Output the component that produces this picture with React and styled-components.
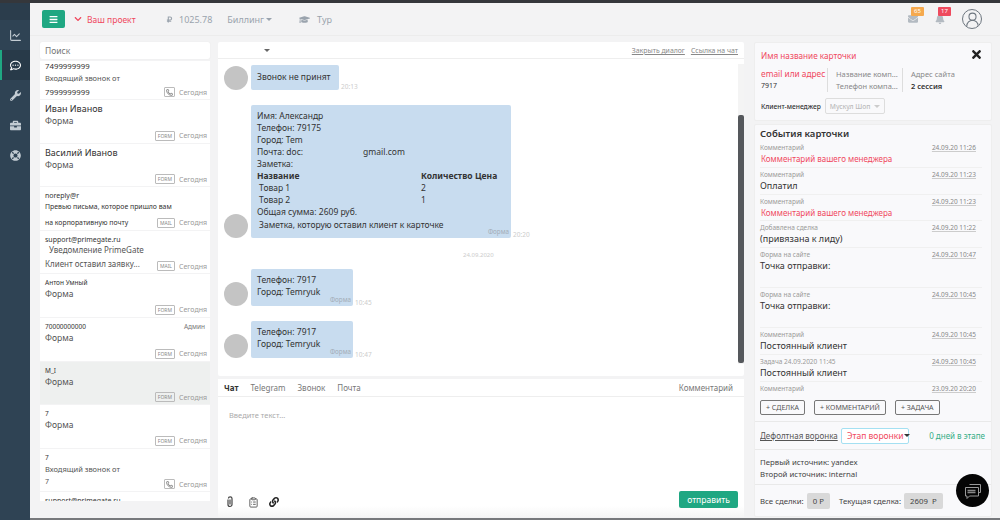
import React from 'react'
import styled, { createGlobalStyle } from 'styled-components'
import {
  FaBars,
  FaBell,
  FaBriefcase,
  FaChevronDown,
  FaEnvelope,
  FaGraduationCap,
  FaLifeRing,
  FaLink,
  FaRegCommentDots,
  FaRubleSign,
  FaTimes,
  FaWrench,
} from 'react-icons/fa'
import { ChartLine, ClipboardList, Phone, UserRound } from 'lucide-react'

const GlobalStyle = createGlobalStyle`
  html, body { margin: 0; padding: 0; height: 520px; overflow: hidden; }
  body { font-family: 'Noto Sans', Roboto, sans-serif; background: #f3f3f4; color: #333; }
  * { box-sizing: border-box; }
`

const Page = styled.div`
  width: 1000px;
  height: 520px;
  display: flex;
  flex-direction: column;
  overflow: hidden;
  position: relative;
`
const TopStripe = styled.div`
  height: 3px;
  flex: none;
  background: #35373b;
`
const BottomStripe = styled.div`
  height: 2px;
  flex: none;
  margin-left: 30px;
  background: #77797c;
`
const Shell = styled.div`
  flex: 1;
  min-height: 0;
  display: flex;
`
const Sidebar = styled.nav`
  width: 30px;
  flex: none;
  background: #2f4354;
  margin-bottom: -2px;
`
const SideLogo = styled.div`
  height: 17px;
  background: #2b3d4c;
`
const SideItem = styled.div`
  height: 30px;
  display: flex;
  align-items: center;
  justify-content: center;
  font-size: 11px;
  background: ${p => (p.$active ? '#283a49' : 'transparent')};
  border-left: 2px solid ${p => (p.$active ? '#1fa782' : 'transparent')};
  padding-right: 2px;
  color: ${p => (p.$active ? '#ffffff' : '#c3ccd3')};
`
const Main = styled.div`
  flex: 1;
  min-width: 0;
  display: flex;
  flex-direction: column;
`
const Header = styled.header`
  height: 33px;
  flex: none;
  display: flex;
  align-items: center;
  padding: 0 18px 0 12px;
  border-bottom: 1px solid #ececec;
  color: #9aa3ad;
  font-size: 9px;
`
const MenuButton = styled.button`
  width: 23px;
  height: 18px;
  border: 0;
  border-radius: 2px;
  background: #1fa782;
  color: #fff;
  font-size: 9px;
  display: flex;
  align-items: center;
  justify-content: center;
  padding: 0;
  margin-right: 9px;
`
const ProjectName = styled.span`
  display: flex;
  align-items: center;
  gap: 5px;
  color: #f0485e;
  width: 92px;
  font-size: 8.5px;
`
const HeaderItem = styled.span`
  display: flex;
  align-items: center;
  gap: ${p => p.$gap || 5}px;
  margin-right: ${p => p.$after || 0}px;
`
const Caret = styled.span`
  display: inline-block;
  width: 0;
  height: 0;
  border-left: 3px solid transparent;
  border-right: 3px solid transparent;
  border-top: 3px solid ${p => p.$color || '#9aa3ad'};
`
const HeaderRight = styled.div`
  margin-left: auto;
  display: flex;
  align-items: center;
`
const NoticeIcon = styled.span`
  position: relative;
  display: flex;
  color: #b3bac1;
  font-size: 10px;
  margin-right: ${p => p.$after}px;
`
const Count = styled.span`
  position: absolute;
  top: -7px;
  left: 3px;
  min-width: 13px;
  height: 9px;
  border-radius: 1px;
  background: ${p => p.$bg};
  color: #fff;
  font-size: 6px;
  line-height: 9px;
  text-align: center;
`
const UserCircle = styled.span`
  width: 20px;
  height: 20px;
  border-radius: 50%;
  border: 1px solid #6e7780;
  display: flex;
  align-items: flex-end;
  justify-content: center;
  color: #6e7780;
  overflow: hidden;
`
const Columns = styled.div`
  flex: 1;
  min-height: 0;
  display: flex;
  padding-top: 6px;
`

/* left list */
const ListColumn = styled.section`
  width: 170px;
  margin-left: 10px;
  flex: none;
  display: flex;
  flex-direction: column;
  height: 459px;
`
const Search = styled.div`
  height: 17px;
  flex: none;
  background: #fff;
  color: #777;
  font-size: 8.5px;
  line-height: 17px;
  padding-left: 5px;
  border-radius: 2px;
  margin-bottom: 2px;
  box-shadow: 0 0 1px #ddd;
`
const List = styled.div`
  flex: 1;
  min-height: 0;
  overflow: hidden;
  display: flex;
  flex-direction: column;
  gap: 1px;
  background: #f3f3f4;
`
const Item = styled.div`
  flex: none;
  height: ${p => p.$h || 42.6}px;
  background: ${p => (p.$selected ? '#eef0ef' : '#fff')};
  padding: ${p => p.$top ?? 3}px 3px 0 5px;
  display: flex;
  flex-direction: column;
  overflow: hidden;
`
const ItemName = styled.div`
  font-size: ${p => p.$size || 7.5}px;
  line-height: ${p => p.$line || 11}px;
  height: ${p => p.$line || 11}px;
  color: #333;
  display: flex;
  justify-content: space-between;
  white-space: nowrap;
`
const Owner = styled.span`
  color: #777;
  padding-right: 2px;
`
const ItemText = styled.div`
  font-size: ${p => p.$size || 8.5}px;
  line-height: ${p => p.$line || 12.5}px;
  color: ${p => p.$color || '#555'};
  padding-left: ${p => p.$pad || 0}px;
  white-space: nowrap;
`
const ItemFooter = styled.div`
  margin-top: auto;
  height: 12px;
  margin-bottom: 1px;
  display: flex;
  align-items: center;
  font-size: ${p => p.$size || 8.5}px;
  color: #333;
  white-space: nowrap;
`
const LiftedText = styled.span`
  color: #555;
  margin-top: -6px;
`
const Meta = styled.span`
  margin-left: auto;
  display: flex;
  align-items: center;
  gap: 4px;
  color: #9a9a9a;
  font-size: 7px;
`
const Tag = styled.span`
  height: 10px;
  min-width: 11px;
  padding: 0 2px;
  border: 1px solid #bbb;
  border-radius: 1px;
  color: #888;
  font-size: 5px;
  line-height: 8px;
  display: flex;
  align-items: center;
  justify-content: center;
`
const PhoneGlyph = styled(Phone)`
  flex: none;
  margin: 0 -2px;
  color: #666;
`

/* chat */
const ChatColumn = styled.section`
  width: 526px;
  flex: none;
  margin-left: 8px;
  display: flex;
  flex-direction: column;
  height: 475px;
`
const ChatTop = styled.div`
  height: 17px;
  flex: none;
  background: #fff;
  border-bottom: 1px solid #eee;
  display: flex;
  align-items: center;
  padding: 0 6px 0 46px;
  border-radius: 2px 2px 0 0;
`
const TopLinks = styled.div`
  margin-left: auto;
  display: flex;
  gap: 6px;
  font-size: 6.9px;
  color: #888;
  text-decoration: underline;
`
const Thread = styled.div`
  height: 317px;
  flex: none;
  background: #fff;
  display: flex;
  overflow: hidden;
  border-radius: 0 0 2px 2px;
`
const Messages = styled.div`
  flex: 1;
  min-width: 0;
  padding: 6px 0 0 6px;
  display: flex;
  flex-direction: column;
`
const Message = styled.div`
  display: flex;
  align-items: flex-end;
  margin-bottom: ${p => p.$after}px;
`
const Avatar = styled.span`
  width: 24px;
  height: 24px;
  flex: none;
  border-radius: 50%;
  background: #c4c4c4;
  margin-right: 3px;
`
const Bubble = styled.div`
  position: relative;
  width: ${p => p.$w}px;
  height: ${p => p.$h}px;
  background: #c8dcef;
  border-radius: 2px;
  padding: ${p => p.$top ?? 5}px 6px 0;
  font-size: 8.5px;
  line-height: 12px;
  color: #333;
  white-space: nowrap;
`
const Source = styled.span`
  position: absolute;
  right: 2px;
  bottom: 2px;
  color: #a3adb7;
  font-size: 6.3px;
  line-height: 8px;
`
const Time = styled.span`
  color: #ccc;
  font-size: 6.5px;
  line-height: 8px;
  margin: 0 0 -1px 2px;
`
const DateMark = styled.div`
  color: #ccc;
  font-size: 6px;
  line-height: 8px;
  padding-left: 239px;
  margin-bottom: 10px;
`
const ProductGrid = styled.div`
  display: grid;
  grid-template-columns: 164px 54px 1fr;
  line-height: ${p => (p.$head ? 12 : 11.5)}px;
  font-weight: ${p => (p.$head ? 700 : 400)};
`
const ProductName = styled.span`
  padding-left: 2px;
`
const ClientNote = styled.div`
  padding-left: 2px;
  margin-top: 1px;
`
const Total = styled.div`
  margin-top: 1px;
`
const MailGap = styled.span`
  display: inline-block;
  width: 60px;
`
const ScrollTrack = styled.div`
  width: 6px;
  margin: 5px 0 12px;
  padding-top: 51px;
  flex: none;
  background: #f4f4f4;
`
const ScrollThumb = styled.div`
  height: 248px;
  background: #55585c;
  border-radius: 2px;
`
const Composer = styled.div`
  margin-top: 3px;
  flex: 1;
  background: linear-gradient(to bottom, #fff 92%, #f5f5f5);
  display: flex;
  flex-direction: column;
`
const Tabs = styled.div`
  height: 18px;
  flex: none;
  display: flex;
  align-items: center;
  gap: 12px;
  padding: 0 11px 0 6px;
  border-bottom: 1px solid #eee;
  font-size: 8px;
  color: #777;
`
const Tab = styled.span`
  font-weight: ${p => (p.$active ? 700 : 400)};
  color: ${p => (p.$active ? '#333' : '#777')};
  margin-left: ${p => (p.$push ? 'auto' : 0)};
`
const Placeholder = styled.div`
  flex: 1;
  padding: 13px 11px;
  font-size: 7.5px;
  color: #aaa;
`
const ComposerBar = styled.div`
  height: 26px;
  flex: none;
  display: flex;
  align-items: flex-start;
  padding: 0 6px 0 8px;
  color: #444;
  font-size: 10px;
`
const Tool = styled.span`
  width: 21.5px;
  height: 17px;
  display: flex;
  align-items: center;
  padding-top: 5px;
  color: ${p => p.$color || '#555'};
`
const SendButton = styled.button`
  margin-left: auto;
  width: 59px;
  height: 17px;
  border: 0;
  border-radius: 2px;
  background: #1fa782;
  color: #fff;
  font: 8.5px 'Noto Sans', sans-serif;
  padding: 0;
`

/* card panel */
const CardColumn = styled.aside`
  width: 238px;
  flex: none;
  margin-left: 10px;
  display: flex;
  flex-direction: column;
  gap: 3px;
  height: 475px;
`
const Panel = styled.div`
  background: #f9f9fb;
  border: 1px solid #eeeeee;
  border-radius: 2px;
`
const CardHead = styled(Panel)`
  height: 79px;
  flex: none;
  padding: 6px 6px;
  display: flex;
  flex-direction: column;
`
const TitleRow = styled.div`
  display: flex;
  justify-content: space-between;
  align-items: center;
  height: 14px;
  color: #f0485e;
  font-size: 8.2px;
  padding-right: 1px;
`
const Close = styled.span`
  display: flex;
  color: #222;
  font-size: 13px;
  margin-right: 1px;
  margin-top: -3px;
`
const ContactRow = styled.div`
  display: flex;
  margin-top: 6px;
  height: 24px;
`
const ContactCol = styled.div`
  width: ${p => p.$w}px;
  flex: none;
  padding-left: ${p => p.$pad || 0}px;
  border-right: ${p => (p.$line ? '1px solid #ddd' : '0')};
  display: flex;
  flex-direction: column;
  justify-content: space-between;
  white-space: nowrap;
  overflow: hidden;
`
const ContactLine = styled.span`
  font-size: ${p => p.$size || 7.5}px;
  line-height: 12px;
  color: ${p => p.$color || '#888'};
  font-weight: ${p => p.$weight || 400};
`
const ManagerRow = styled.div`
  display: flex;
  align-items: center;
  margin-top: 6px;
  font-size: 6.7px;
  color: #333;
  font-weight: 500;
  white-space: nowrap;
`
const ManagerSelect = styled.span`
  margin-left: 4px;
  width: 60px;
  height: 16px;
  border: 1px solid #ddd;
  border-radius: 2px;
  color: #bbb;
  display: flex;
  align-items: center;
  justify-content: space-between;
  padding: 0 4px;
`
const CardBody = styled(Panel)`
  flex: 1;
  min-height: 0;
  display: flex;
  flex-direction: column;
`
const EventsTitle = styled.div`
  font-size: 9.5px;
  font-weight: 600;
  line-height: 14px;
  margin: 2px 0 0 5px;
  color: #333;
`
const Events = styled.div`
  height: 254px;
  flex: none;
  overflow: hidden;
  padding: 0 9px 0 5px;
`
const EventRow = styled.div`
  height: ${p => p.$h || 26.8}px;
  border-bottom: 1px solid #f0f0f0;
  padding-top: 2px;
`
const EventTop = styled.div`
  display: flex;
  justify-content: space-between;
  font-size: 6.5px;
  line-height: 10px;
  color: #999;
  padding-right: 6px;
`
const EventDate = styled.span`
  color: #888;
  text-decoration: underline;
  text-decoration-color: #ccc;
`
const EventText = styled.div`
  font-size: ${p => (p.$red ? 8 : 9)}px;
  line-height: 12px;
  padding-left: ${p => (p.$red ? 1 : 0)}px;
  color: ${p => (p.$red ? '#f0485e' : '#333')};
  white-space: nowrap;
`
const ActionRow = styled.div`
  display: flex;
  height: 27px;
  flex: none;
  gap: 9px;
  align-items: flex-start;
  padding: 5px 0 0 5px;
  border-bottom: 1px solid #e9e9e9;
`
const ActionButton = styled.button`
  height: 15px;
  border: 1px solid #777;
  border-radius: 2px;
  background: transparent;
  color: #555;
  font: 7px 'Noto Sans', sans-serif;
  padding: 0 5px;
  white-space: nowrap;
`
const FunnelRow = styled.div`
  height: 28px;
  flex: none;
  display: flex;
  align-items: center;
  padding: 0 6px 0 5px;
  border-bottom: 1px solid #e9e9e9;
  font-size: 8px;
  white-space: nowrap;
`
const FunnelName = styled.span`
  color: #555;
  text-decoration: underline;
  width: 81px;
  overflow: hidden;
`
const FunnelStage = styled.span`
  width: 68px;
  height: 16px;
  border: 1px solid #a4e0f2;
  border-radius: 2px;
  background: #fff;
  color: #f0485e;
  font-size: 8.5px;
  display: flex;
  align-items: center;
  justify-content: space-between;
  padding: 0 1px 0 5px;
`
const StageDays = styled.span`
  margin-left: auto;
  color: #34ad85;
`
const Sources = styled.div`
  height: 35px;
  flex: none;
  padding: 7px 5px 0;
  font-size: 7.8px;
  line-height: 11.5px;
  color: #444;
  border-bottom: 1px solid #e9e9e9;
`
const Totals = styled.div`
  flex: 1;
  display: flex;
  align-items: center;
  padding: 0 5px;
  font-size: 7.8px;
  color: #444;
`
const Sum = styled.span`
  height: 16px;
  border-radius: 2px;
  background: #d9d9d9;
  padding: 0 6px;
  margin: 0 9px 0 3px;
  line-height: 16px;
  white-space: pre;
`
const ChatBubbleButton = styled.span`
  position: absolute;
  left: 956px;
  top: 474px;
  width: 33px;
  height: 33px;
  border-radius: 50%;
  background: #050505;
  display: flex;
  align-items: center;
  justify-content: center;
`

const PhoneTag = () => (
  <Tag>
    <PhoneGlyph size={7} strokeWidth={2.5} />
  </Tag>
)

const ClipIcon = () => (
  <svg width="8" height="12" viewBox="0 0 8 12" fill="none" stroke="#444" strokeWidth="1.2">
    <path d="M2 3.5v5a2 2 0 0 0 4 0V2.6A1.8 1.8 0 0 0 2.4 2.6" />
    <path d="M4 3.5v5" />
  </svg>
)

const ChatIcon = () => (
  <svg width="20" height="20" viewBox="0 0 20 20" fill="none" stroke="#999" strokeWidth="1">
    <path d="M6.5 3.5h11v8h-2" />
    <path d="M2.5 6.5h13v8.5H6.5l-2.5 2.5V15H2.5z" fill="#050505" />
    <path d="M4.5 9.5h8M4.5 11.5h8" stroke="#888" strokeWidth="1.4" />
  </svg>
)

const rows = [
  { name: 'Иван Иванов', size: 9, text: 'Форма', tag: 'FORM' },
  { name: 'Василий Иванов', size: 9, text: 'Форма', tag: 'FORM' },
]

const events = [
  { label: 'Комментарий', date: '24.09.20 11:26', text: 'Комментарий вашего менеджера', red: true },
  { label: 'Комментарий', date: '24.09.20 11:23', text: 'Оплатил' },
  { label: 'Комментарий', date: '24.09.20 11:23', text: 'Комментарий вашего менеджера', red: true },
  { label: 'Добавлена сделка', date: '24.09.20 11:22', text: '(привязана к лиду)' },
  { label: 'Форма на сайте', date: '24.09.20 10:47', text: 'Точка отправки:', h: 40 },
  { label: 'Форма на сайте', date: '24.09.20 10:45', text: 'Точка отправки:', h: 40 },
  { label: 'Комментарий', date: '24.09.20 10:45', text: 'Постоянный клиент' },
  { label: 'Задача 24.09.2020 11:45', date: '24.09.20 10:45', text: 'Постоянный клиент' },
  { label: 'Комментарий', date: '23.09.20 20:20', text: '' },
]

export default function App() {
  return (
    <Page>
      <GlobalStyle />
      <TopStripe />
      <Shell>
        <Sidebar>
          <SideLogo />
          <SideItem><ChartLine size={13} /></SideItem>
          <SideItem $active><FaRegCommentDots /></SideItem>
          <SideItem><FaWrench /></SideItem>
          <SideItem><FaBriefcase /></SideItem>
          <SideItem><FaLifeRing /></SideItem>
        </Sidebar>
        <Main>
          <Header>
            <MenuButton><FaBars /></MenuButton>
            <ProjectName><FaChevronDown size={8} />Ваш проект</ProjectName>
            <HeaderItem $after={15} $gap={6}><FaRubleSign size={7} />1025.78</HeaderItem>
            <HeaderItem $after={27} $gap={2}>Биллинг<Caret /></HeaderItem>
            <HeaderItem $gap={7}><FaGraduationCap size={11} />Тур</HeaderItem>
            <HeaderRight>
              <NoticeIcon $after={17}><FaEnvelope /><Count $bg="#f5a94e">65</Count></NoticeIcon>
              <NoticeIcon $after={17}><FaBell /><Count $bg="#ee4a5e">17</Count></NoticeIcon>
              <UserCircle><UserRound size={17} strokeWidth={1.5} /></UserCircle>
            </HeaderRight>
          </Header>
          <Columns>
            <ListColumn>
              <Search>Поиск</Search>
              <List>
                <Item $h={38} $top={0}>
                  <ItemName $size={7.8}>7499999999</ItemName>
                  <ItemText $size={7.5} $line={12}>Входящий звонок от</ItemText>
                  <ItemFooter $size={7.8}>7999999999<Meta><PhoneTag />Сегодня</Meta></ItemFooter>
                </Item>
                {rows.map(r => (
                  <Item key={r.name}>
                    <ItemName $size={r.size} $line={12}>{r.name}</ItemName>
                    <ItemText>{r.text}</ItemText>
                    <ItemFooter><Meta><Tag>{r.tag}</Tag>Сегодня</Meta></ItemFooter>
                  </Item>
                ))}
                <Item>
                  <ItemName $size={7}>noreply@r</ItemName>
                  <ItemText $size={6.9} $line={12} $color="#333">Превью письма, которое пришло вам</ItemText>
                  <ItemFooter $size={6.9}>на корпоративную почту<Meta><Tag>MAIL</Tag>Сегодня</Meta></ItemFooter>
                </Item>
                <Item>
                  <ItemName $size={7}>support@primegate.ru</ItemName>
                  <ItemText $size={8} $line={10} $pad={4}>Уведомление PrimeGate</ItemText>
                  <ItemFooter $size={8}><LiftedText>Клиент оставил заявку...</LiftedText><Meta><Tag>MAIL</Tag>Сегодня</Meta></ItemFooter>
                </Item>
                <Item>
                  <ItemName $size={6.5}>Антон Умный</ItemName>
                  <ItemText>Форма</ItemText>
                  <ItemFooter><Meta><Tag>FORM</Tag>Сегодня</Meta></ItemFooter>
                </Item>
                <Item>
                  <ItemName $size={6.5}>70000000000<Owner>Админ</Owner></ItemName>
                  <ItemText>Форма</ItemText>
                  <ItemFooter><Meta><Tag>FORM</Tag>Сегодня</Meta></ItemFooter>
                </Item>
                <Item $selected>
                  <ItemName $size={6.5}>M_I</ItemName>
                  <ItemText>Форма</ItemText>
                  <ItemFooter><Meta><Tag>FORM</Tag>Сегодня</Meta></ItemFooter>
                </Item>
                <Item>
                  <ItemName $size={6.5}>7</ItemName>
                  <ItemText>Форма</ItemText>
                  <ItemFooter><Meta><Tag>FORM</Tag>Сегодня</Meta></ItemFooter>
                </Item>
                <Item>
                  <ItemName $size={6.5}>7</ItemName>
                  <ItemText $size={7.5}>Входящий звонок от</ItemText>
                  <ItemFooter $size={7}><LiftedText>7</LiftedText><Meta><PhoneTag />Сегодня</Meta></ItemFooter>
                </Item>
                <Item $h={9}>
                  <ItemName $size={7}>support@primegate.ru</ItemName>
                </Item>
              </List>
            </ListColumn>

            <ChatColumn>
              <ChatTop>
                <Caret $color="#666" />
                <TopLinks><span>Закрыть диалог</span><span>Ссылка на чат</span></TopLinks>
              </ChatTop>
              <Thread>
                <Messages>
                  <Message $after={15}>
                    <Avatar />
                    <Bubble $w={88} $h={25} $top={6}>Звонок не принят</Bubble>
                    <Time>20:13</Time>
                  </Message>
                  <Message $after={13}>
                    <Avatar />
                    <Bubble $w={260} $h={133}>
                      Имя: Александр<br />
                      Телефон: 79175<br />
                      Город: Tem<br />
                      Почта: doc:<MailGap />gmail.com<br />
                      Заметка:
                      <ProductGrid $head><span>Название</span><span>Количество</span><span>Цена</span></ProductGrid>
                      <ProductGrid><ProductName>Товар 1</ProductName><span>2</span></ProductGrid>
                      <ProductGrid><ProductName>Товар 2</ProductName><span>1</span></ProductGrid>
                      <Total>Общая сумма: 2609 руб.</Total>
                      <ClientNote>Заметка, которую оставил клиент к карточке</ClientNote>
                      <Source>Форма</Source>
                    </Bubble>
                    <Time>20:20</Time>
                  </Message>
                  <DateMark>24.09.2020</DateMark>
                  <Message $after={15}>
                    <Avatar />
                    <Bubble $w={102} $h={37}>
                      Телефон: 7917<br />Город: Temryuk
                      <Source>Форма</Source>
                    </Bubble>
                    <Time>10:45</Time>
                  </Message>
                  <Message $after={0}>
                    <Avatar />
                    <Bubble $w={102} $h={37}>
                      Телефон: 7917<br />Город: Temryuk
                      <Source>Форма</Source>
                    </Bubble>
                    <Time>10:47</Time>
                  </Message>
                </Messages>
                <ScrollTrack><ScrollThumb /></ScrollTrack>
              </Thread>
              <Composer>
                <Tabs>
                  <Tab $active>Чат</Tab>
                  <Tab>Telegram</Tab>
                  <Tab>Звонок</Tab>
                  <Tab>Почта</Tab>
                  <Tab $push>Комментарий</Tab>
                </Tabs>
                <Placeholder>Введите текст...</Placeholder>
                <ComposerBar>
                  <Tool><ClipIcon /></Tool>
                  <Tool><ClipboardList size={11} /></Tool>
                  <Tool $color="#222"><FaLink /></Tool>
                  <SendButton>отправить</SendButton>
                </ComposerBar>
              </Composer>
            </ChatColumn>

            <CardColumn>
              <CardHead>
                <TitleRow>
                  Имя название карточки
                  <Close><FaTimes /></Close>
                </TitleRow>
                <ContactRow>
                  <ContactCol $w={67} $line>
                    <ContactLine $size={8.3} $color="#f0485e">email или адрес</ContactLine>
                    <ContactLine $size={7} $color="#333">7917</ContactLine>
                  </ContactCol>
                  <ContactCol $w={75} $pad={8} $line>
                    <ContactLine>Название комп...</ContactLine>
                    <ContactLine>Телефон компа...</ContactLine>
                  </ContactCol>
                  <ContactCol $w={70} $pad={8}>
                    <ContactLine>Адрес сайта</ContactLine>
                    <ContactLine $color="#333" $weight={600}>2 сессия</ContactLine>
                  </ContactCol>
                </ContactRow>
                <ManagerRow>
                  Клиент-менеджер
                  <ManagerSelect>Мускул Шоп<Caret $color="#ccc" /></ManagerSelect>
                </ManagerRow>
              </CardHead>
              <CardBody>
                <EventsTitle>События карточки</EventsTitle>
                <Events>
                  {events.map((e, i) => (
                    <EventRow key={i} $h={e.h}>
                      <EventTop><span>{e.label}</span><EventDate>{e.date}</EventDate></EventTop>
                      <EventText $red={e.red}>{e.text}</EventText>
                    </EventRow>
                  ))}
                </Events>
                <ActionRow>
                  <ActionButton>+ СДЕЛКА</ActionButton>
                  <ActionButton>+ КОММЕНТАРИЙ</ActionButton>
                  <ActionButton>+ ЗАДАЧА</ActionButton>
                </ActionRow>
                <FunnelRow>
                  <FunnelName>Дефолтная воронка</FunnelName>
                  <FunnelStage>Этап воронки<Caret $color="#333" /></FunnelStage>
                  <StageDays>0 дней в этапе</StageDays>
                </FunnelRow>
                <Sources>
                  Первый источник: yandex<br />
                  Второй источник: internal
                </Sources>
                <Totals>
                  Все сделки:<Sum>0 Р</Sum>Текущая сделка:<Sum>2609  Р</Sum>
                </Totals>
              </CardBody>
            </CardColumn>
          </Columns>
        </Main>
      </Shell>
      <BottomStripe />
      <ChatBubbleButton><ChatIcon /></ChatBubbleButton>
    </Page>
  )
}
